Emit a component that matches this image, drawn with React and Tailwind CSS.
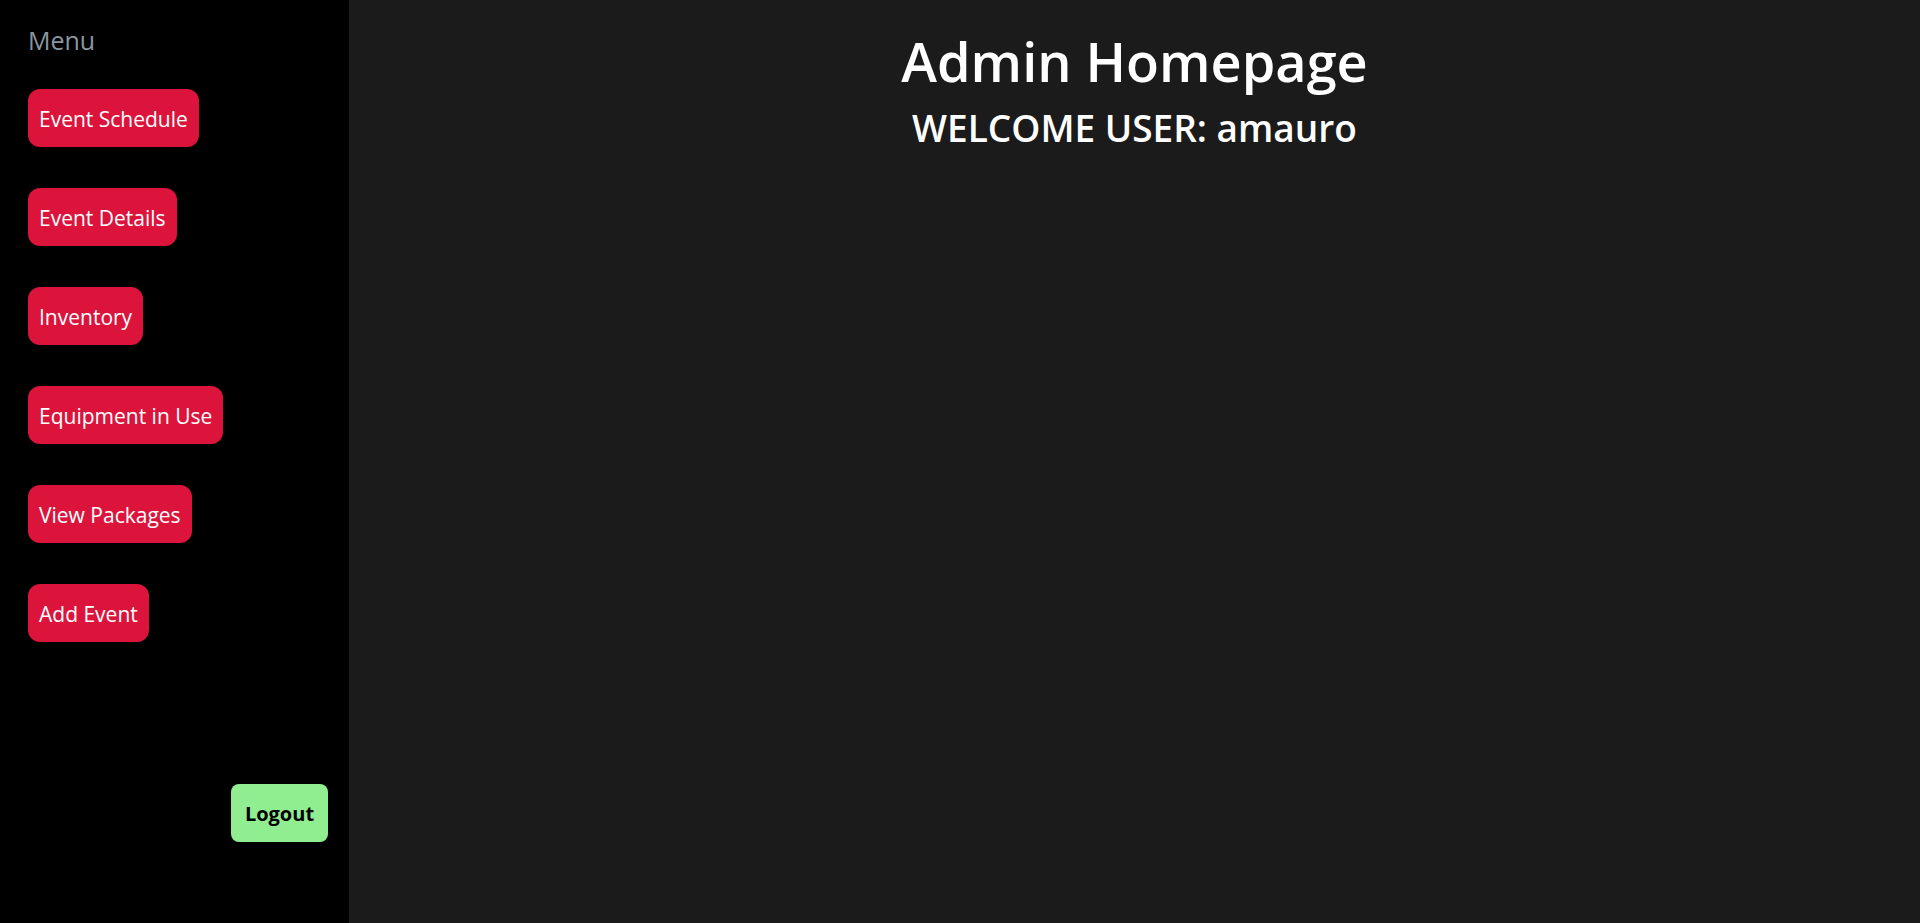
const menuItems = [
  'Event Schedule',
  'Event Details',
  'Inventory',
  'Equipment in Use',
  'View Packages',
  'Add Event'
]

const App = () => {
  return (
    <div className="flex h-[923px] w-full font-['Open_Sans',sans-serif] bg-[#1b1b1b]">
      {/* Sidebar */}
      <aside className="flex w-[349px] shrink-0 flex-col bg-black pl-[28px] pr-[21px]">
        <h2 className="mt-[22px] text-[25px] leading-[36px] text-[#8a97a1]">Menu</h2>

        <nav className="mt-[31px] flex flex-col items-start gap-[41px]">
          {menuItems.map((item) => (
            <button
              key={item}
              className="h-[58px] rounded-[12px] bg-[#dc143c] px-[11px] pt-[3px] text-[21px] text-white"
            >
              {item}
            </button>
          ))}
        </nav>

        <div className="mt-auto mb-[81px] flex justify-end">
          <button className="h-[58px] w-[97px] rounded-[8px] bg-[#90ee90] pt-[2px] text-[20px] font-bold text-black">
            Logout
          </button>
        </div>
      </aside>

      {/* Main */}
      <main className="flex-1 text-center text-white">
        <h1 className="mt-[25px] text-[54px] font-semibold leading-[72px]">Admin Homepage</h1>
        <h2 className="mt-[6px] text-[37px] font-semibold leading-[50px]">WELCOME USER: amauro</h2>
      </main>
    </div>
  )
}

export default App
